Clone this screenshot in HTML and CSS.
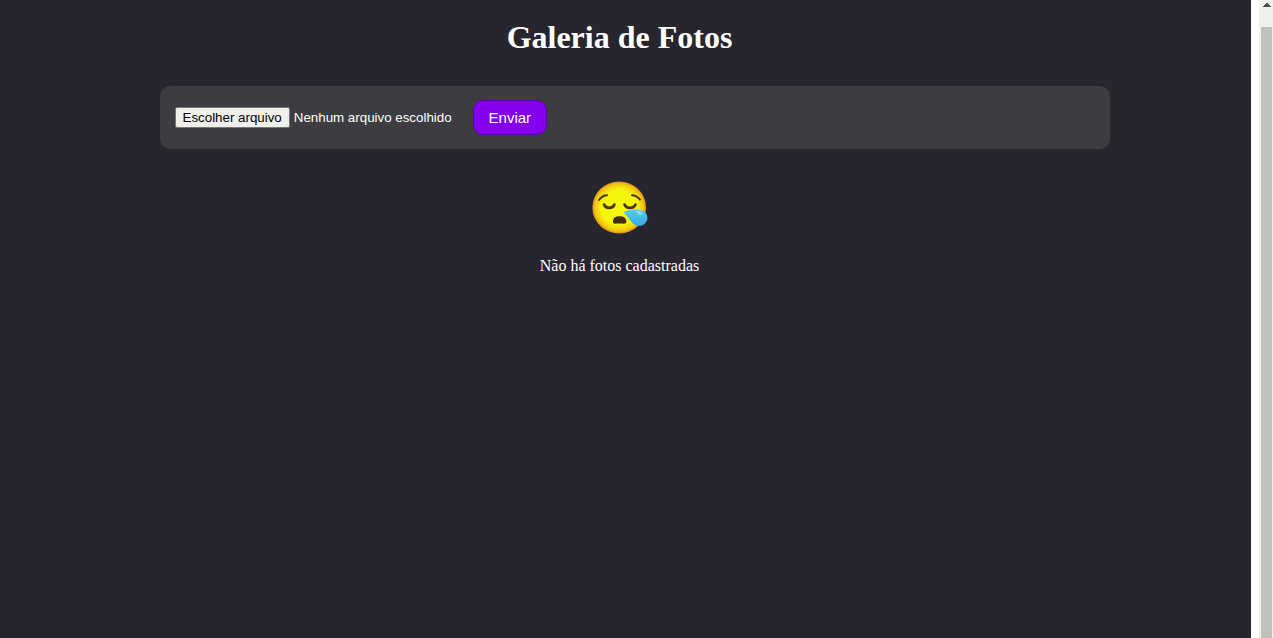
FILE: index.html
```html
<!DOCTYPE html>
<html lang="pt-BR">
<head>
<meta charset="utf-8">
<title>Galeria de Fotos</title>
<link rel="stylesheet" href="styles.css">
</head>
<body>
<div class="window">
  <main class="page">
    <div class="container">
      <h1 class="title">Galeria de Fotos</h1>
      <form class="upload">
        <div class="file">
          <input class="file-input" type="file" id="photo" name="image">
          <label class="file-button" for="photo">Escolher arquivo</label>
          <span class="file-name">Nenhum arquivo escolhido</span>
        </div>
        <button class="submit" type="submit">Enviar</button>
      </form>
      <section class="empty">
        <svg class="emoji" viewBox="0 0 60 60" role="img" aria-label="Emoji sonolento">
          <defs>
            <radialGradient id="face" cx="50%" cy="50%" r="51%">
              <stop offset="0" stop-color="#f4fa0c"/>
              <stop offset="0.66" stop-color="#f4f40c"/>
              <stop offset="0.88" stop-color="#f3c714"/>
              <stop offset="1" stop-color="#dc8a12"/>
            </radialGradient>
            <linearGradient id="drop" x1="0" y1="0" x2="0" y2="1">
              <stop offset="0" stop-color="#55ccf5"/>
              <stop offset="1" stop-color="#36a9e6"/>
            </linearGradient>
          </defs>
          <ellipse cx="29.2" cy="30.500" rx="26.800" ry="26" fill="url(#face)"/>
          <g fill="none" stroke="#4b3410" stroke-linecap="round">
            <path d="M9 23Q12.500 18.300 17 18.200" stroke-width="2"/>
            <path d="M42 18.200Q46.500 18.300 50 22.500" stroke-width="2"/>
            <path d="M14 27.500C15.500 32 23 32 24.500 27.500" stroke-width="2.600"/>
            <path d="M34.500 27.500C36 32 44 32 45.500 27.500" stroke-width="2.600"/>
          </g>
          <path d="M23 44.800C23 40.800 25.300 39.200 29.500 39.200C33.700 39.200 36.200 40.800 36.400 44.800C36 47.600 33.500 46.500 29.500 46.500C25.500 46.500 23 47.600 23 44.800Z" fill="#442c14"/>
          <path d="M33.500 35.600C36 33.500 42 32.300 47 32.500C53 32.700 57.200 35.600 57.400 40.500C57.500 45 53.500 49.200 49 49C42 48.800 39.500 40.700 33.500 35.600Z" fill="url(#drop)"/>
          <path d="M46 34.200C49 33.200 52.700 34.600 52.500 36.700C51.700 39.200 46.500 37 46 34.200Z" fill="#8cddfa"/>
        </svg>
        <p class="message">Não há fotos cadastradas</p>
      </section>
    </div>
  </main>
  <div class="scrollbar" aria-hidden="true">
    <svg class="arrow" viewBox="0 0 8 4"><path d="M3 0h2v1h1v1h1v1h1v1H0V3h1V2h1V1h1z" fill="#4e4e4b"/></svg>
    <div class="thumb"></div>
  </div>
</div>
</body>
</html>
```
FILE: styles.css
```css
* {
  box-sizing: border-box;
}

body {
  margin: 0;
  background: #fffffb;
  color: #fff;
  font: 16px/18px "Liberation Serif", "Times New Roman", serif;
}

.window {
  display: flex;
  gap: 8px;
  min-height: 100vh;
}

.page {
  flex: 1;
  padding: 0 12px 0 0;
  background: #27252e;
}

.container {
  max-width: 920px;
  margin: 0 auto;
}

.title {
  margin: 0;
  padding: 19px 0 31px;
  font-size: 32px;
  line-height: 36px;
  text-align: center;
}

.upload {
  display: flex;
  align-items: center;
  gap: 21px;
  margin-right: -30px;
  padding: 14px 15px;
  border-radius: 10px;
  background: #3d3c41;
  font-family: "Liberation Sans", Arial, sans-serif;
}

.file {
  position: relative;
  display: flex;
  align-items: center;
  gap: 4px;
  font-size: smaller;
  line-height: 15px;
}

.file-input {
  position: absolute;
  inset: 0;
  width: 100%;
  opacity: 0;
}

.file-button {
  padding: 2px 7px;
  border: 1px solid #767676;
  border-radius: 2px;
  background: #efefec;
  color: #000;
}

.submit {
  padding: 7px 15px;
  border: 1px solid #5b00ae;
  border-radius: 10px;
  background: #8500ec;
  color: #fff;
  font: 15px/19px "Liberation Sans", Arial, sans-serif;
}

.empty {
  display: flex;
  flex-direction: column;
  align-items: center;
  padding-top: 28px;
}

.emoji {
  width: 60px;
  height: 60px;
}

.message {
  margin: 20px 0 0;
}

.scrollbar {
  display: flex;
  flex-direction: column;
  width: 14px;
  padding: 3px 1px 0 2px;
  background: #f0f0ed;
}

.arrow {
  align-self: center;
  width: 8px;
  height: 4px;
  margin-bottom: 20px;
}

.thumb {
  flex: 1;
  background: #c0c0bd;
}
```
